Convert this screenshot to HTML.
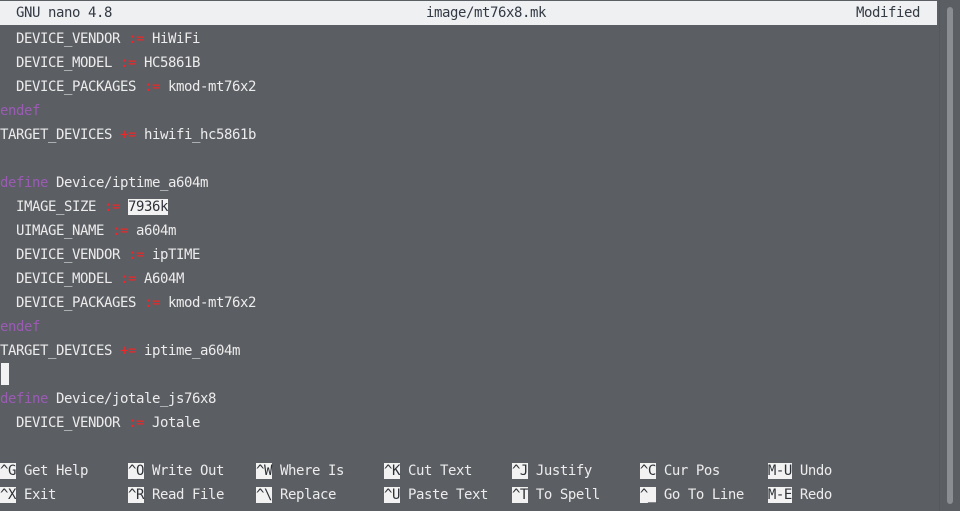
<!DOCTYPE html>
<html><head><style>
body{margin:0;width:960px;height:511px;background:#5b5e63;overflow:hidden;position:relative;font-family:"DejaVu Sans Mono","Liberation Mono",monospace;font-size:14px;letter-spacing:-0.43px;color:#ececec}
.r{position:absolute;left:0;height:24px;line-height:24px;white-space:pre}
.t{position:absolute;left:0;top:1px;width:937px;height:24px;background:#eef0f2;color:#343a44;line-height:25px;white-space:pre}
.o{color:#f0262a}.k{color:#9b5bb5}
.h{background:#f2f2f2;color:#2e3238}
.sb{position:absolute;left:939px;top:0;width:1px;height:511px;background:#55585c}
.th{position:absolute;left:947px;top:7px;width:6px;height:497px;background:#8a8d91;border-radius:3px}
</style></head><body>
<div class="t"><span style="position:absolute;left:16px">GNU nano 4.8</span><span style="position:absolute;left:426px">image/mt76x8.mk</span><span style="position:absolute;left:856px">Modified</span></div>
<div class="r" style="top:27px">  DEVICE_VENDOR <span class="o">:=</span> HiWiFi</div>
<div class="r" style="top:51px">  DEVICE_MODEL <span class="o">:=</span> HC5861B</div>
<div class="r" style="top:75px">  DEVICE_PACKAGES <span class="o">:=</span> kmod-mt76x2</div>
<div class="r" style="top:99px"><span class="k">endef</span></div>
<div class="r" style="top:123px">TARGET_DEVICES <span class="o">+=</span> hiwifi_hc5861b</div>
<div class="r" style="top:171px"><span class="k">define</span> Device/iptime_a604m</div>
<div class="r" style="top:195px">  IMAGE_SIZE <span class="o">:=</span> <span class="h">7936k</span></div>
<div class="r" style="top:219px">  UIMAGE_NAME <span class="o">:=</span> a604m</div>
<div class="r" style="top:243px">  DEVICE_VENDOR <span class="o">:=</span> ipTIME</div>
<div class="r" style="top:267px">  DEVICE_MODEL <span class="o">:=</span> A604M</div>
<div class="r" style="top:291px">  DEVICE_PACKAGES <span class="o">:=</span> kmod-mt76x2</div>
<div class="r" style="top:315px"><span class="k">endef</span></div>
<div class="r" style="top:339px">TARGET_DEVICES <span class="o">+=</span> iptime_a604m</div>
<div style="position:absolute;left:1px;top:363px;width:8px;height:22px;background:#f2f2f2"></div>
<div class="r" style="top:387px"><span class="k">define</span> Device/jotale_js76x8</div>
<div class="r" style="top:411px">  DEVICE_VENDOR <span class="o">:=</span> Jotale</div>
<div class="r" style="top:459px"><span class="h">^G</span> Get Help     <span class="h">^O</span> Write Out    <span class="h">^W</span> Where Is     <span class="h">^K</span> Cut Text     <span class="h">^J</span> Justify      <span class="h">^C</span> Cur Pos      <span class="h">M-U</span> Undo</div>
<div class="r" style="top:483px"><span class="h">^X</span> Exit         <span class="h">^R</span> Read File    <span class="h">^\</span> Replace      <span class="h">^U</span> Paste Text   <span class="h">^T</span> To Spell     <span class="h">^_</span> Go To Line   <span class="h">M-E</span> Redo</div>
<div class="sb"></div><div class="th"></div>
</body></html>
